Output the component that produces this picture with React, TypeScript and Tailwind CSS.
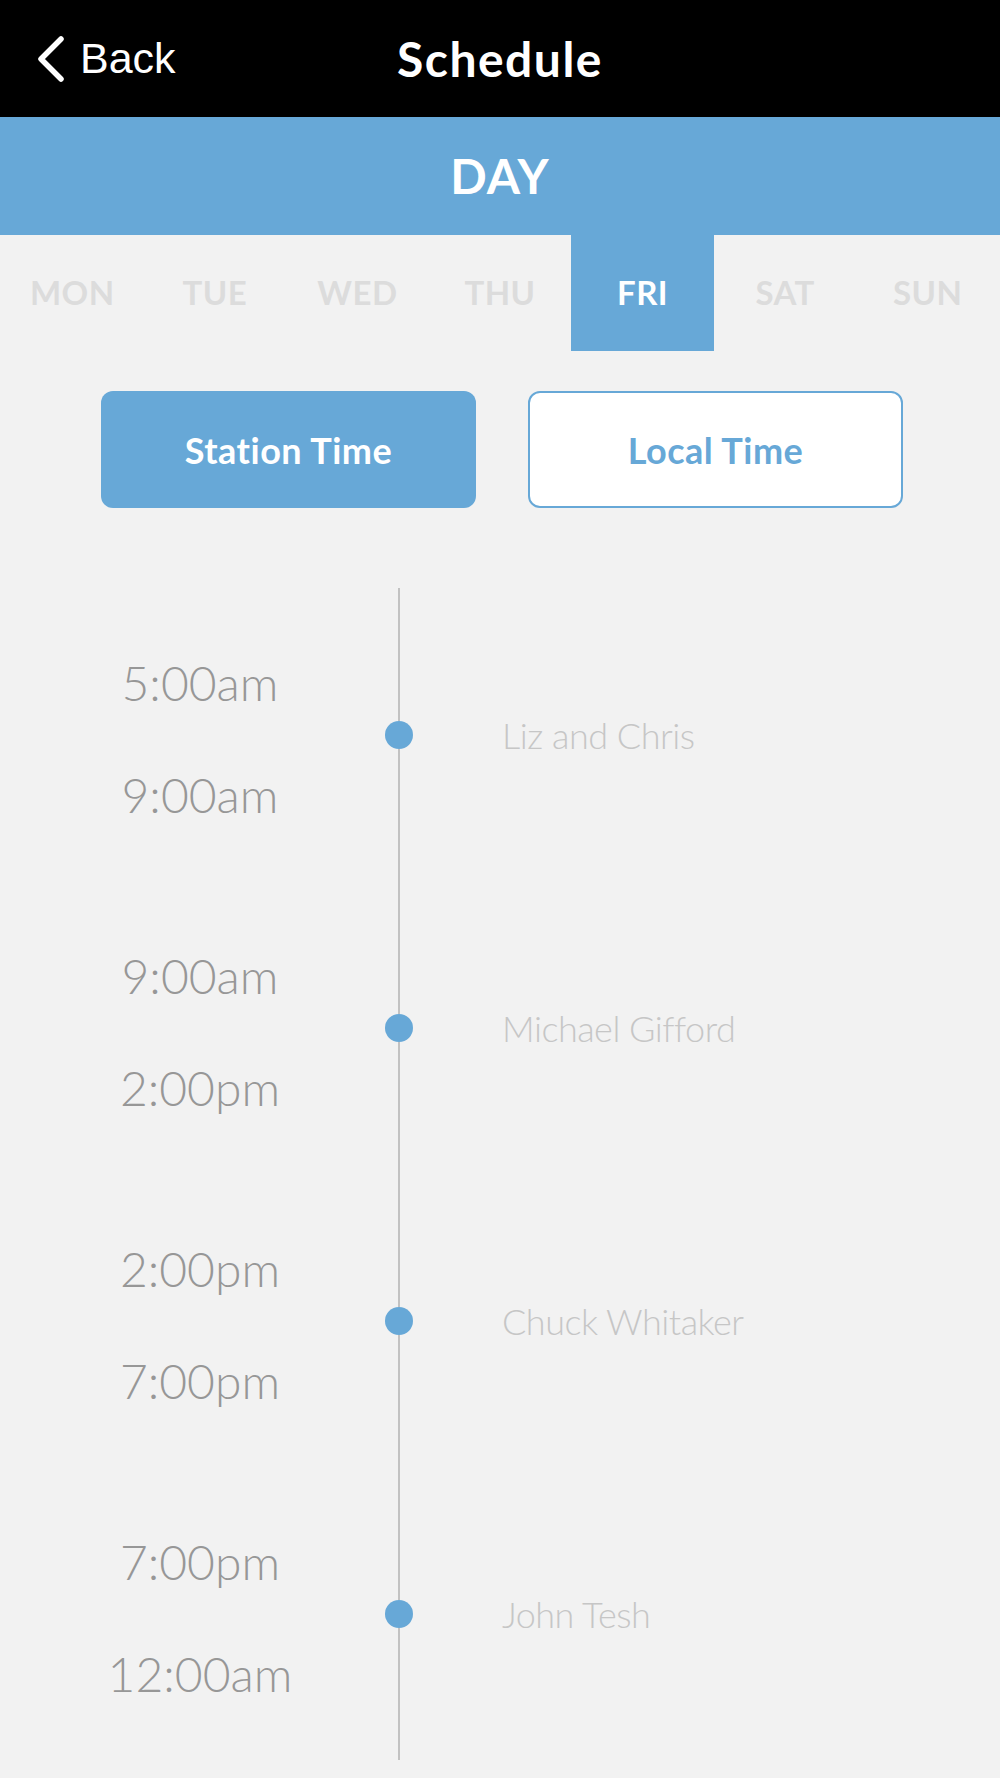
const days = ["MON", "TUE", "WED", "THU", "FRI", "SAT", "SUN"];

const shows = [
  { start: "5:00am", end: "9:00am", host: "Liz and Chris" },
  { start: "9:00am", end: "2:00pm", host: "Michael Gifford" },
  { start: "2:00pm", end: "7:00pm", host: "Chuck Whitaker" },
  { start: "7:00pm", end: "12:00am", host: "John Tesh" },
];

const ShowRow = ({ show }: any) => {
  return (
    <div className="flex h-[293px]">
      <div className="w-[385px] pl-[15px] pt-[8px] flex flex-col justify-center items-center gap-[56px] text-[48px] leading-[56px] font-light text-[#979797]">
        <span>{show.start}</span>
        <span>{show.end}</span>
      </div>
      <div className="w-[28px] flex flex-col items-center">
        <div className="flex-1 w-[2px] bg-[#c2c2c2]" />
        <div className="h-[28px] w-[28px] rounded-full bg-[#67a8d7]" />
        <div className="flex-1 w-[2px] bg-[#c2c2c2]" />
      </div>
      <div className="flex-1 pl-[89px] flex items-center text-[36px] font-light text-[#c6c6c6] tracking-[-0.5px]">
        {show.host}
      </div>
    </div>
  );
};

export default function App() {
  return (
    <div className="w-[1000px] min-h-[1778px] bg-[#f2f2f2] font-['Lato',sans-serif]">
      <div className="h-[117px] bg-black grid grid-cols-[1fr_auto_1fr] items-center">
        <div className="flex items-center gap-[14px] pl-[36px] text-white font-['Liberation_Sans',sans-serif] text-[43px]">
          <svg width="30" height="48" viewBox="0 0 30 48" fill="none">
            <polyline points="25,4 5,24 25,44" stroke="white" strokeWidth="5.5" strokeLinecap="round" strokeLinejoin="round" />
          </svg>
          <span>Back</span>
        </div>
        <h1 className="text-white text-[48px] font-bold tracking-[1.5px]">Schedule</h1>
        <div />
      </div>

      <div className="h-[118px] bg-[#67a8d7] flex items-center justify-center text-white text-[48px] font-bold tracking-[1px]">
        DAY
      </div>

      <div className="grid grid-cols-7 h-[116px] px-[1px]">
        {days.map((d) => (
          <div
            key={d}
            className={
              d === "FRI"
                ? "bg-[#67a8d7] text-white flex items-center justify-center text-[33px] font-bold tracking-[0.5px]"
                : "text-[#dcdcdc] flex items-center justify-center text-[33px] font-bold tracking-[0.5px]"
            }
          >
            {d}
          </div>
        ))}
      </div>

      <div className="flex justify-center gap-[52px] mt-[40px] pl-[4px]">
        <button className="w-[375px] h-[117px] rounded-[12px] bg-[#67a8d7] text-white text-[36px] font-bold tracking-[0.5px]">
          Station Time
        </button>
        <button className="w-[375px] h-[117px] rounded-[12px] bg-white border-2 border-[#67a8d7] text-[#67a8d7] text-[36px] font-bold tracking-[0.5px]">
          Local Time
        </button>
      </div>

      <div className="mt-[80px] flex flex-col">
        {shows.map((s, i) => (
          <ShowRow key={i} show={s} />
        ))}
      </div>
    </div>
  );
}
